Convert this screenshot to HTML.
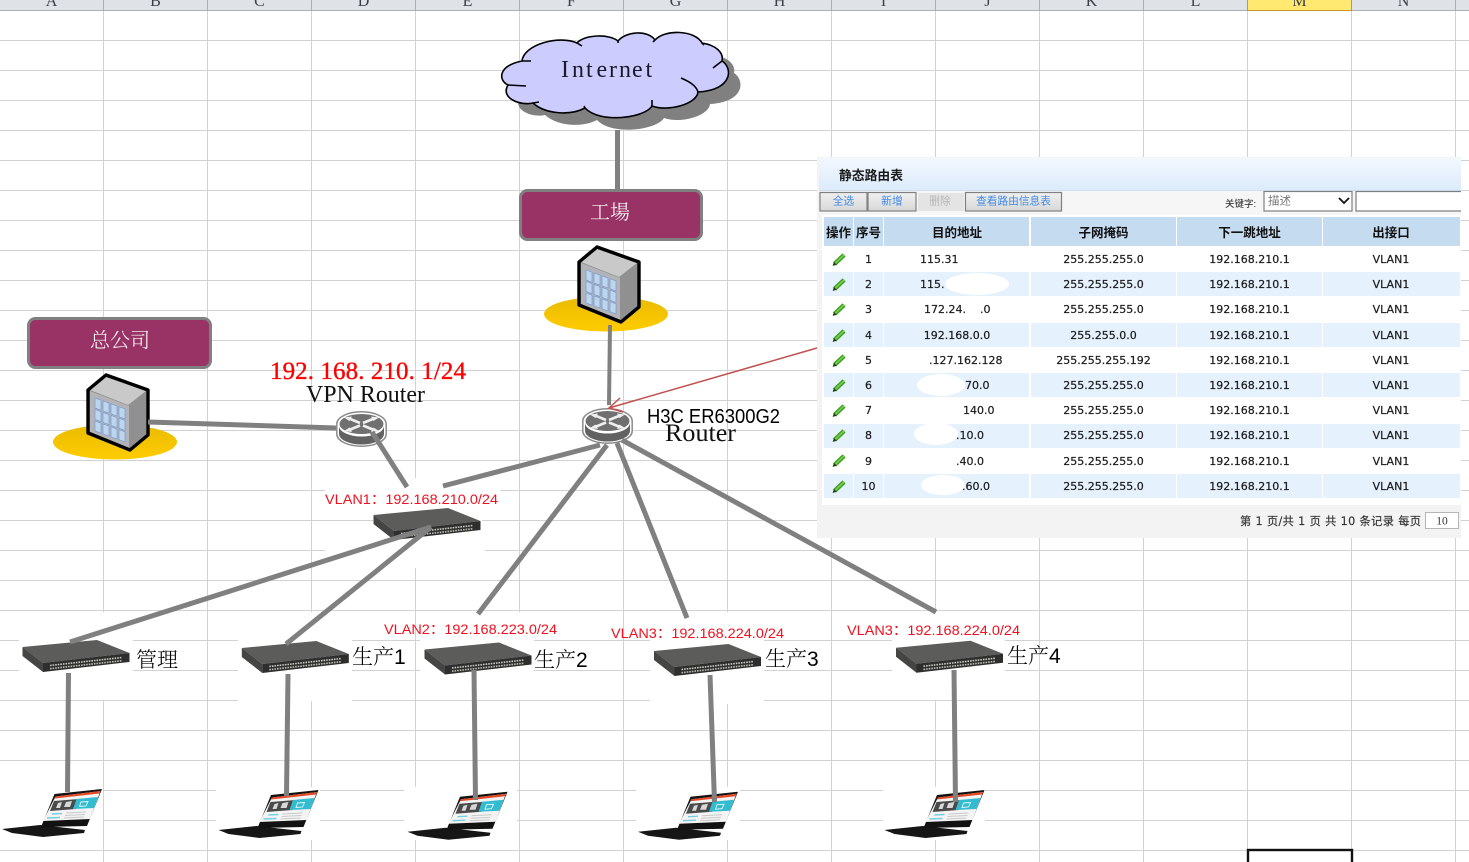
<!DOCTYPE html>
<html lang="zh">
<head>
<meta charset="utf-8">
<title>Network diagram</title>
<style>
html,body{margin:0;padding:0;background:#fff;width:1469px;height:862px;overflow:hidden}
svg{display:block}
.hd{font:16px "Liberation Serif",serif;fill:#3a3f48;text-anchor:middle}
.cj{font-family:"Noto Serif CJK SC","Liberation Serif",serif;font-weight:300}
.lb{font-family:"Noto Serif CJK SC",serif;font-size:21px;font-weight:300;fill:#000}
.dg{font-family:"Liberation Sans",sans-serif;font-size:21px;fill:#000}
.vl{font-family:"Liberation Sans","Noto Sans CJK SC",sans-serif;font-size:14px;fill:#f01020}
.th{font-family:"Liberation Sans","Noto Sans CJK SC",sans-serif;font-size:12.5px;font-weight:700;fill:#111;text-anchor:middle}
.td{font-family:"DejaVu Sans",sans-serif;font-size:11px;fill:#1c1c1c;stroke:#1c1c1c;stroke-width:.22px;text-anchor:middle}
.tl{font-family:"DejaVu Sans",sans-serif;font-size:11px;fill:#1c1c1c;stroke:#1c1c1c;stroke-width:.22px}
.bt{font-family:"Liberation Sans","Noto Sans CJK SC",sans-serif;font-size:10.7px;fill:#3f8ae8;text-anchor:middle}
.ln{stroke:#808080;fill:none}
</style>
</head>
<body>
<svg width="1469" height="862" viewBox="0 0 1469 862" xmlns="http://www.w3.org/2000/svg">
<defs>
<pattern id="grid" width="104" height="30" patternUnits="userSpaceOnUse" patternTransform="translate(0,11)">
<rect x="103" width="1" height="30" fill="#d2d2d2"/>
<rect y="29" width="104" height="1" fill="#d2d2d2"/>
</pattern>
<linearGradient id="gold" x1="0" y1="0" x2="0" y2="1"><stop offset="0" stop-color="#e9bb00"/><stop offset="1" stop-color="#ffcc00"/></linearGradient>
<linearGradient id="bar" x1="0" y1="0" x2="0" y2="1"><stop offset="0" stop-color="#f3f8fe"/><stop offset="1" stop-color="#dcebfb"/></linearGradient>
<linearGradient id="btn" x1="0" y1="0" x2="0" y2="1"><stop offset="0" stop-color="#f0f0f0"/><stop offset="1" stop-color="#d8d8d8"/></linearGradient>

<g id="building">
<ellipse cx="606" cy="314" rx="62" ry="17.5" fill="url(#gold)"/>
<polygon points="597,247 639,262 639,307 621,322 579,305 579,262" fill="#909090"/>
<polygon points="581,262 597,249 637,263 619,277" fill="#c9c9c9"/>
<polygon points="581,263 620,278 620,320 581,304" fill="#b2b4b8"/>
<g transform="translate(586,270) skewY(20)" fill="#bcd6f0" stroke="#6f95d0" stroke-width=".6">
<rect x="0" y="0" width="6" height="10"/><rect x="8" y="0" width="6" height="10"/><rect x="16" y="0" width="6" height="10"/><rect x="24" y="0" width="6" height="10"/>
<rect x="0" y="11.5" width="6" height="10"/><rect x="8" y="11.5" width="6" height="10"/><rect x="16" y="11.5" width="6" height="10"/><rect x="24" y="11.5" width="6" height="10"/>
<rect x="0" y="23" width="6" height="10"/><rect x="8" y="23" width="6" height="10"/><rect x="16" y="23" width="6" height="10"/><rect x="24" y="23" width="6" height="10"/>
</g>
<polygon points="597,247 639,262 639,307 621,322 579,305 579,262" fill="none" stroke="#000" stroke-width="3.4" stroke-linejoin="round"/>
</g>

<g id="router">
<path d="M.8,13 A24.7,12.2 0 0 1 50.2,13 V23 A24.7,12.2 0 0 1 .8,23Z" fill="#fff" stroke="#8a8a8a" stroke-width="1.5"/>
<path d="M3,15 V23 A22.5,10.5 0 0 0 48,23 V15 A22.5,10.5 0 0 1 3,15Z" fill="#626262"/>
<ellipse cx="25.5" cy="13" rx="22" ry="10" fill="#707070"/>
<path d="M13,7.5 L24,12 M38,7.5 L27,12 M13,19 L24,14.5 M38,19 L27,14.5" stroke="#efefef" stroke-width="2.6" fill="none"/>
<path d="M8,6.5 L16,5.5 L13.5,10Z M43,6.5 L35,5.5 L37.5,10Z M8,20 L16,21 L13.5,16.5Z M43,20 L35,21 L37.5,16.5Z" fill="#efefef"/>
</g>

<g id="switch">
<polygon points="22.5,647 97,640 129.5,653 43,663" fill="#5c5c5a"/>
<polygon points="22.5,647 43,663 43,672 22.5,656" fill="#454544"/>
<polygon points="43,663 129.5,653 129.5,662 43,672" fill="#2e2e2e"/>
<path d="M50,665.5 L122,657.5" stroke="#c8c8c0" stroke-width="1.6" stroke-dasharray="1.6 1" fill="none"/>
<path d="M50,668.7 L122,660.7" stroke="#bcbcb0" stroke-width="1.6" stroke-dasharray="1.6 1" fill="none"/>
</g>

<g id="laptop">
<polygon points="2,829 40,825 85,830 84,833 43,837 12,833" fill="#161616"/>
<polygon points="54.5,794 102,789 87,826 41,827" fill="#121212"/>
<polygon points="55.5,796.5 100.5,791 90,819 43,821" fill="#f4f4f4"/>
<polygon points="55.5,796.5 100.5,791 99.6,793.5 54.6,798.5" fill="#e34a25"/>
<polygon points="54,801 79,799 76,809 50,811" fill="#4a4a4a"/>
<path d="M58,803 L62,802 L60,808 L56,808Z M66,802 L72,801 L70,807 L64,807Z" fill="#d8d8d8"/>
<polygon points="76.5,799 98,797 94,808 73,809" fill="#33bccf"/>
<path d="M81,802 L88,801.5 L86,806 L79.5,806.5Z" fill="none" stroke="#e8fbff" stroke-width=".9"/>
<path d="M52,814 L62,813.5 M47,818 L60,817.5" stroke="#73cfe0" stroke-width="1.4"/>
<path d="M66,813 L86,812 M65,815.5 L85,814.5 M64,818 L84,817" stroke="#c9c9c9" stroke-width="1"/>
</g>

<g id="pencil">
<path d="M834.5,264 L844,255" stroke="#3f9a24" stroke-width="4.4" stroke-linecap="butt"/>
<path d="M835,263.5 L844.3,254.6" stroke="#6fd04a" stroke-width="1.8"/>
<path d="M832.6,266 L834,262 L836.6,264.6Z" fill="#1f3a12"/>
</g>
</defs>

<rect width="1469" height="862" fill="#fff"/>
<rect y="11" width="1469" height="851" fill="url(#grid)"/>

<!-- header -->
<rect width="1469" height="10" fill="#dfe3e8"/>
<rect y="10" width="1469" height="1" fill="#abafb5"/>
<g fill="#abb0b8">
<rect x="103" width="1" height="10"/><rect x="207" width="1" height="10"/><rect x="311" width="1" height="10"/><rect x="415" width="1" height="10"/><rect x="519" width="1" height="10"/><rect x="623" width="1" height="10"/><rect x="727" width="1" height="10"/><rect x="831" width="1" height="10"/><rect x="935" width="1" height="10"/><rect x="1039" width="1" height="10"/><rect x="1143" width="1" height="10"/><rect x="1351" width="1" height="10"/><rect x="1455" width="1" height="10"/>
</g>
<rect x="1247" width="105" height="10" fill="#ffe971"/>
<rect x="1247" y="0" width="1" height="11" fill="#c9962b"/><rect x="1351" y="0" width="1" height="11" fill="#c9962b"/><rect x="1247" y="10" width="105" height="1" fill="#c9962b"/>
<g class="hd">
<text class="hd" x="51.5" y="6">A</text><text class="hd" x="155.5" y="6">B</text><text class="hd" x="259.5" y="6">C</text><text class="hd" x="363.5" y="6">D</text><text class="hd" x="467.5" y="6">E</text><text class="hd" x="571.5" y="6">F</text><text class="hd" x="675.5" y="6">G</text><text class="hd" x="779.5" y="6">H</text><text class="hd" x="883.5" y="6">I</text><text class="hd" x="987.5" y="6">J</text><text class="hd" x="1091.5" y="6">K</text><text class="hd" x="1195.5" y="6">L</text><text class="hd" x="1299.5" y="6">M</text><text class="hd" x="1403.5" y="6">N</text>
</g>

<!-- white patches behind pasted images -->
<g fill="#fff">
<rect x="19" y="612" width="114" height="88"/>
<rect x="238" y="612" width="114" height="89"/>
<rect x="420" y="612" width="114" height="88"/>
<rect x="650" y="612" width="114" height="92"/>
<rect x="892" y="612" width="113" height="88"/>
<rect x="373" y="478" width="109" height="90"/>
<rect x="325" y="490" width="175" height="22"/>
<rect x="325" y="540" width="160" height="20"/>
<rect x="0" y="770" width="103" height="75"/>
<rect x="216" y="787" width="104" height="53"/>
<rect x="404" y="787" width="113" height="53"/>
<rect x="636" y="787" width="104" height="53"/>
<rect x="883" y="787" width="102" height="53"/>
</g>

<!-- cloud -->
<path transform="translate(12,12)" fill="#808080" d="M522,61 C524,44 560,35 577,43 C585,34 610,34 618,41 C626,31 648,30 655,40 C665,29 695,30 702,43 C715,45 724,52 722,61 C733,68 733,90 698,92 C697,104 668,112 652,106 C645,118 600,124 585,108 C570,116 545,114 533,103 C520,106 500,98 508,85 C498,80 498,66 522,61Z"/>
<path fill="#ccccff" stroke="#000" stroke-width="1.6" stroke-linejoin="round" d="M522,61 C524,44 560,35 577,43 C585,34 610,34 618,41 C626,31 648,30 655,40 C665,29 695,30 702,43 C715,45 724,52 722,61 C733,68 733,90 698,92 C697,104 668,112 652,106 C645,118 600,124 585,108 C570,116 545,114 533,103 C520,106 500,98 508,85 C498,80 498,66 522,61Z"/>
<path fill="none" stroke="#000" stroke-width="1.6" d="M522,61 L531,61 M508,85 L526,86 M533,103 L539,102 M585,108 L584,106 M652,106 L652,100 M698,92 C696,85 688,81 681,78 M722,61 L713,68 M577,43 L582,46 M618,41 L618,43 M655,40 L653,42 M702,43 L704,45"/>
<text x="561 572 586 596.5 609 619 632 645.5" y="77" font-family="Liberation Serif,serif" font-size="24" fill="#1a1a2a">Internet</text>

<!-- connecting line cloud to box -->
<rect x="615" y="130" width="5" height="60" fill="#808080"/>

<!-- boxes -->
<rect x="520.5" y="190.5" width="181" height="49" rx="7" fill="#993366" stroke="#808080" stroke-width="3"/>
<text x="590" y="219" class="cj" font-size="20" fill="#fff">工場</text>
<rect x="28.5" y="318.5" width="182" height="49" rx="7" fill="#993366" stroke="#808080" stroke-width="3"/>
<text x="90" y="347" class="cj" font-size="20" fill="#fff">总公司</text>

<use href="#building"/>
<use href="#building" transform="translate(-491,128)"/>

<!-- switches -->
<use href="#switch"/>
<use href="#switch" transform="translate(219.3,1)"/>
<use href="#switch" transform="translate(402,2.5)"/>
<use href="#switch" transform="translate(631.5,4)"/>
<use href="#switch" transform="translate(873.5,.7)"/>
<use href="#switch" transform="translate(351,-132)"/>

<!-- laptops -->
<use href="#laptop"/>
<use href="#laptop" transform="translate(216.5,1)"/>
<use href="#laptop" transform="translate(405.5,2.7)"/>
<use href="#laptop" transform="translate(636,2.7)"/>
<use href="#laptop" transform="translate(882.5,1)"/>

<!-- routers -->
<use href="#router" transform="translate(336,411)"/>
<use href="#router" transform="translate(582,408)"/>

<!-- lines -->
<g class="ln">
<path d="M610,325 L609,405" stroke-width="4"/>
<path d="M148,422 L336,428" stroke-width="5"/>
<path d="M372,432 L407,487" stroke-width="5"/>
<path d="M600,445 L443,486" stroke-width="5"/>
<path d="M607,445 L478,614" stroke-width="5"/>
<path d="M617,443 L687,618" stroke-width="5"/>
<path d="M622,440 L936,612" stroke-width="5"/>
<path d="M431,527 L70,642" stroke-width="5"/>
<path d="M431,527 L286,644" stroke-width="5"/>
<path d="M68.5,673 L67.5,792" stroke-width="5"/>
<path d="M288,674 L286.5,796" stroke-width="5"/>
<path d="M474,670 L475.5,800" stroke-width="5"/>
<path d="M710,675 L714.5,802" stroke-width="5"/>
<path d="M954,670 L955.5,802" stroke-width="5"/>
</g>

<!-- red arrow -->
<path d="M817,348 L609,408 M620,398 L609,408 L623,412" fill="none" stroke="#c0504d" stroke-width="1.5"/>

<!-- labels -->
<text x="270" y="379" font-family="Liberation Serif,serif" font-size="25" fill="#ff0000" stroke="#ff0000" stroke-width=".35" textLength="196" lengthAdjust="spacing">192. 168. 210. 1/24</text>
<text x="306" y="402" font-family="Liberation Serif,serif" font-size="24" fill="#111" textLength="119" lengthAdjust="spacingAndGlyphs">VPN Router</text>
<text x="647" y="423" font-family="Liberation Sans,sans-serif" font-size="20" fill="#000" textLength="133" lengthAdjust="spacingAndGlyphs">H3C ER6300G2</text>
<text x="665" y="441" font-family="Liberation Serif,serif" font-size="25" fill="#111" textLength="71" lengthAdjust="spacingAndGlyphs">Router</text>
<text class="vl" x="325" y="504" textLength="173" lengthAdjust="spacingAndGlyphs">VLAN1：192.168.210.0/24</text>
<text class="vl" x="384" y="634" textLength="173" lengthAdjust="spacingAndGlyphs">VLAN2：192.168.223.0/24</text>
<text class="vl" x="611" y="638" textLength="173" lengthAdjust="spacingAndGlyphs">VLAN3：192.168.224.0/24</text>
<text class="vl" x="847" y="635" textLength="173" lengthAdjust="spacingAndGlyphs">VLAN3：192.168.224.0/24</text>
<text class="lb" x="136" y="667">管理</text>
<text class="lb" x="352" y="664">生产<tspan class="dg">1</tspan></text>
<text class="lb" x="534" y="667">生产<tspan class="dg">2</tspan></text>
<text class="lb" x="765" y="666">生产<tspan class="dg">3</tspan></text>
<text class="lb" x="1007" y="663">生产<tspan class="dg">4</tspan></text>

<!-- panel -->
<rect x="817" y="157" width="644" height="381" fill="#f3f3f3"/>
<rect x="819" y="158" width="642" height="32" fill="url(#bar)"/>
<rect x="819" y="190" width="642" height="1" fill="#cfe0f2"/>
<rect x="819" y="191" width="642" height="24" fill="#f6f6f6"/>
<rect x="822" y="215" width="639" height="290" fill="#fff"/>
<text x="839" y="180" font-family="Liberation Sans,Noto Sans CJK SC,sans-serif" font-size="12.8" font-weight="700" fill="#1a1a1a">静态路由表</text>

<g stroke="#808080" stroke-width="1.2" fill="url(#btn)">
<rect x="820" y="192.5" width="47" height="18.5"/>
<rect x="868" y="192.5" width="48" height="18.5"/>
<rect x="965.5" y="192.5" width="96" height="18.5"/>
</g>
<rect x="918" y="193" width="46" height="18" fill="#e4e4e4"/>
<text class="bt" x="843.5" y="204.5">全选</text>
<text class="bt" x="892" y="204.5">新增</text>
<text class="bt" x="940" y="204.5" style="fill:#b5b5b5">删除</text>
<text class="bt" x="1013.5" y="204.5">查看路由信息表</text>

<text x="1225" y="207" font-family="Liberation Sans,Noto Sans CJK SC,sans-serif" font-size="9.5" fill="#222">关键字:</text>
<rect x="1264" y="191.5" width="88" height="19.5" fill="#fff" stroke="#7f7f7f" stroke-width="1.2"/>
<text x="1268" y="204.5" font-family="Liberation Sans,Noto Sans CJK SC,sans-serif" font-size="11.5" fill="#777">描述</text>
<path d="M1339,198 L1344,203 L1349,198" fill="none" stroke="#111" stroke-width="1.8"/>
<rect x="1356" y="191.5" width="105" height="19.5" fill="#fff"/>
<path d="M1461,191.5 H1356 V211 H1461" fill="none" stroke="#7f7f7f" stroke-width="1.2"/>

<!-- table header -->
<g fill="#c5dbf0">
<rect x="824" y="217" width="29" height="29"/>
<rect x="854" y="217" width="29" height="29"/>
<rect x="884" y="217" width="145" height="29"/>
<rect x="1031" y="217" width="145" height="29"/>
<rect x="1177" y="217" width="145" height="29"/>
<rect x="1323" y="217" width="137" height="29"/>
</g>
<text class="th" x="838.5" y="237">操作</text>
<text class="th" x="868.5" y="237">序号</text>
<text class="th" x="957" y="237">目的地址</text>
<text class="th" x="1103.5" y="237">子网掩码</text>
<text class="th" x="1249.5" y="237">下一跳地址</text>
<text class="th" x="1391" y="237">出接口</text>

<!-- striped rows -->
<g fill="#e5f1fc">
<g id="st"><rect x="824" y="272" width="29" height="24"/><rect x="854" y="272" width="29" height="24"/><rect x="884" y="272" width="145" height="24"/><rect x="1031" y="272" width="145" height="24"/><rect x="1177" y="272" width="145" height="24"/><rect x="1323" y="272" width="137" height="24"/></g>
<use href="#st" y="51"/>
<use href="#st" y="101"/>
<use href="#st" y="152"/>
<use href="#st" y="202"/>
</g>

<!-- pencils -->
<use href="#pencil"/><use href="#pencil" y="25"/><use href="#pencil" y="50"/><use href="#pencil" y="76"/><use href="#pencil" y="101"/><use href="#pencil" y="126"/><use href="#pencil" y="151"/><use href="#pencil" y="176"/><use href="#pencil" y="201"/><use href="#pencil" y="227"/>

<!-- row text -->
<text class="td" x="868.5" y="263">1</text><text class="tl" x="920" y="263">115.31</text><text class="td" x="1103.5" y="263">255.255.255.0</text><text class="td" x="1249.5" y="263">192.168.210.1</text><text class="td" x="1391" y="263">VLAN1</text>
<text class="td" x="868.5" y="288">2</text><text class="tl" x="920" y="288">115.</text><text class="td" x="1103.5" y="288">255.255.255.0</text><text class="td" x="1249.5" y="288">192.168.210.1</text><text class="td" x="1391" y="288">VLAN1</text>
<text class="td" x="868.5" y="313">3</text><text class="tl" x="924" y="313">172.24.</text><text class="tl" x="980" y="313">.0</text><text class="td" x="1103.5" y="313">255.255.255.0</text><text class="td" x="1249.5" y="313">192.168.210.1</text><text class="td" x="1391" y="313">VLAN1</text>
<text class="td" x="868.5" y="339">4</text><text class="td" x="957" y="339">192.168.0.0</text><text class="td" x="1103.5" y="339">255.255.0.0</text><text class="td" x="1249.5" y="339">192.168.210.1</text><text class="td" x="1391" y="339">VLAN1</text>
<text class="td" x="868.5" y="364">5</text><text class="tl" x="929" y="364">.127.162.128</text><text class="td" x="1103.5" y="364">255.255.255.192</text><text class="td" x="1249.5" y="364">192.168.210.1</text><text class="td" x="1391" y="364">VLAN1</text>
<text class="td" x="868.5" y="389">6</text><text class="tl" x="965" y="389">70.0</text><text class="td" x="1103.5" y="389">255.255.255.0</text><text class="td" x="1249.5" y="389">192.168.210.1</text><text class="td" x="1391" y="389">VLAN1</text>
<text class="td" x="868.5" y="414">7</text><text class="tl" x="963" y="414">140.0</text><text class="td" x="1103.5" y="414">255.255.255.0</text><text class="td" x="1249.5" y="414">192.168.210.1</text><text class="td" x="1391" y="414">VLAN1</text>
<text class="td" x="868.5" y="439">8</text><text class="tl" x="956" y="439">.10.0</text><text class="td" x="1103.5" y="439">255.255.255.0</text><text class="td" x="1249.5" y="439">192.168.210.1</text><text class="td" x="1391" y="439">VLAN1</text>
<text class="td" x="868.5" y="465">9</text><text class="tl" x="956" y="465">.40.0</text><text class="td" x="1103.5" y="465">255.255.255.0</text><text class="td" x="1249.5" y="465">192.168.210.1</text><text class="td" x="1391" y="465">VLAN1</text>
<text class="td" x="868.5" y="490">10</text><text class="tl" x="962" y="490">.60.0</text><text class="td" x="1103.5" y="490">255.255.255.0</text><text class="td" x="1249.5" y="490">192.168.210.1</text><text class="td" x="1391" y="490">VLAN1</text>

<!-- white redaction blobs -->
<g fill="#fff">
<ellipse cx="977" cy="284" rx="32" ry="11"/>
<ellipse cx="941" cy="385" rx="24" ry="11"/>
<ellipse cx="936" cy="434" rx="22" ry="11"/>
<ellipse cx="943" cy="485" rx="22" ry="10"/>
</g>

<!-- pager -->
<text x="1240" y="525" font-family="DejaVu Sans,Noto Sans CJK SC,sans-serif" font-size="11.2" fill="#333" stroke="#333" stroke-width=".15" textLength="181" lengthAdjust="spacing">第 1 页/共 1 页 共 10 条记录 每页</text>
<rect x="1425.5" y="512.5" width="33" height="16" fill="#fff" stroke="#b5b5b5"/>
<text x="1442" y="524.5" font-family="Liberation Serif,serif" font-size="11.5" fill="#333" text-anchor="middle">10</text>

<!-- selection box -->
<rect x="1248" y="850" width="104" height="20" fill="none" stroke="#111" stroke-width="2.4"/>
</svg>
</body>
</html>
